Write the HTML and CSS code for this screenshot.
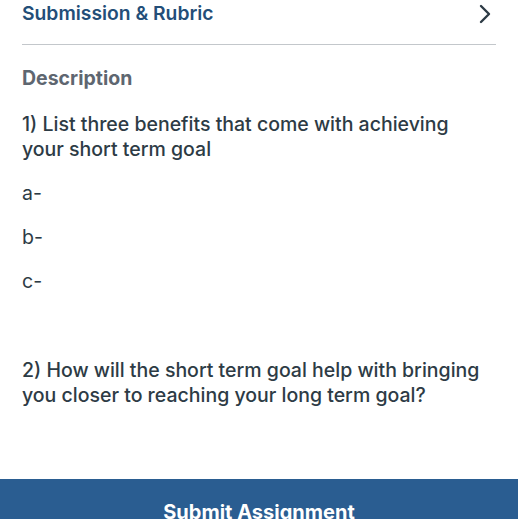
FILE: index.html
```html
<!DOCTYPE html>
<html lang="en">
<head>
    <meta charset="UTF-8">
    <meta name="viewport" content="width=device-width, initial-scale=1.0">
    <title>Assignment Details</title>
    <link rel="stylesheet" href="styles.css">
</head>
<body>
    <div class="content">
        <div class="rubric-row">
            <span class="rubric-title">Submission &amp; Rubric</span>
            <svg class="chevron" width="14" height="20" viewBox="0 0 14 20">
                <path d="M3 2 L11 10 L3 18" fill="none" stroke="#2d3b45" stroke-width="2.4" stroke-linecap="round" stroke-linejoin="round"/>
            </svg>
        </div>

        <h2 class="section-label">Description</h2>

        <div class="description">
            <p class="question">1) List three benefits that come with achieving your short term goal</p>
            <p class="answer">a-</p>
            <p class="answer">b-</p>
            <p class="answer">c-</p>

            <p class="question second">2) How will the short term goal help with bringing you closer to reaching your long term goal?</p>
        </div>
    </div>

    <button class="submit-btn">Submit Assignment</button>
</body>
</html>
```

FILE: styles.css
```css
body {
    margin: 0;
    font-family: Inter, "Noto Sans", sans-serif;
    background: #fff;
    color: #2d3b45;
    overflow: hidden;
}
.content {
    padding: 0 22px;
}
.rubric-row {
    display: flex;
    justify-content: space-between;
    align-items: flex-start;
    height: 44px;
    border-bottom: 1px solid #c3c7cb;
}
.rubric-title {
    font-size: 19.3px;
    font-weight: 600;
    line-height: 26px;
    color: #234e78;
}
.chevron {
    margin-top: 4px;
    margin-right: 4px;
}
.section-label {
    margin: 20px 0 0;
    font-size: 19.5px;
    font-weight: 700;
    line-height: 26px;
    color: #5e6670;
}
.description {
    padding-right: 10px;
}
.question {
    margin: 21px 0 0;
    font-size: 19.5px;
    font-weight: 500;
    line-height: 25px;
}
.question.second {
    margin-top: 64px;
}
.answer {
    margin: 19px 0 0;
    font-size: 19.5px;
    line-height: 25px;
}
.submit-btn {
    display: block;
    width: 100%;
    margin-top: 71px;
    padding: 20px 0 20px;
    border: none;
    background: #2a5d91;
    color: #fff;
    font-family: Inter, "Noto Sans", sans-serif;
    font-size: 20px;
    font-weight: 700;
    line-height: 26px;
}
```
